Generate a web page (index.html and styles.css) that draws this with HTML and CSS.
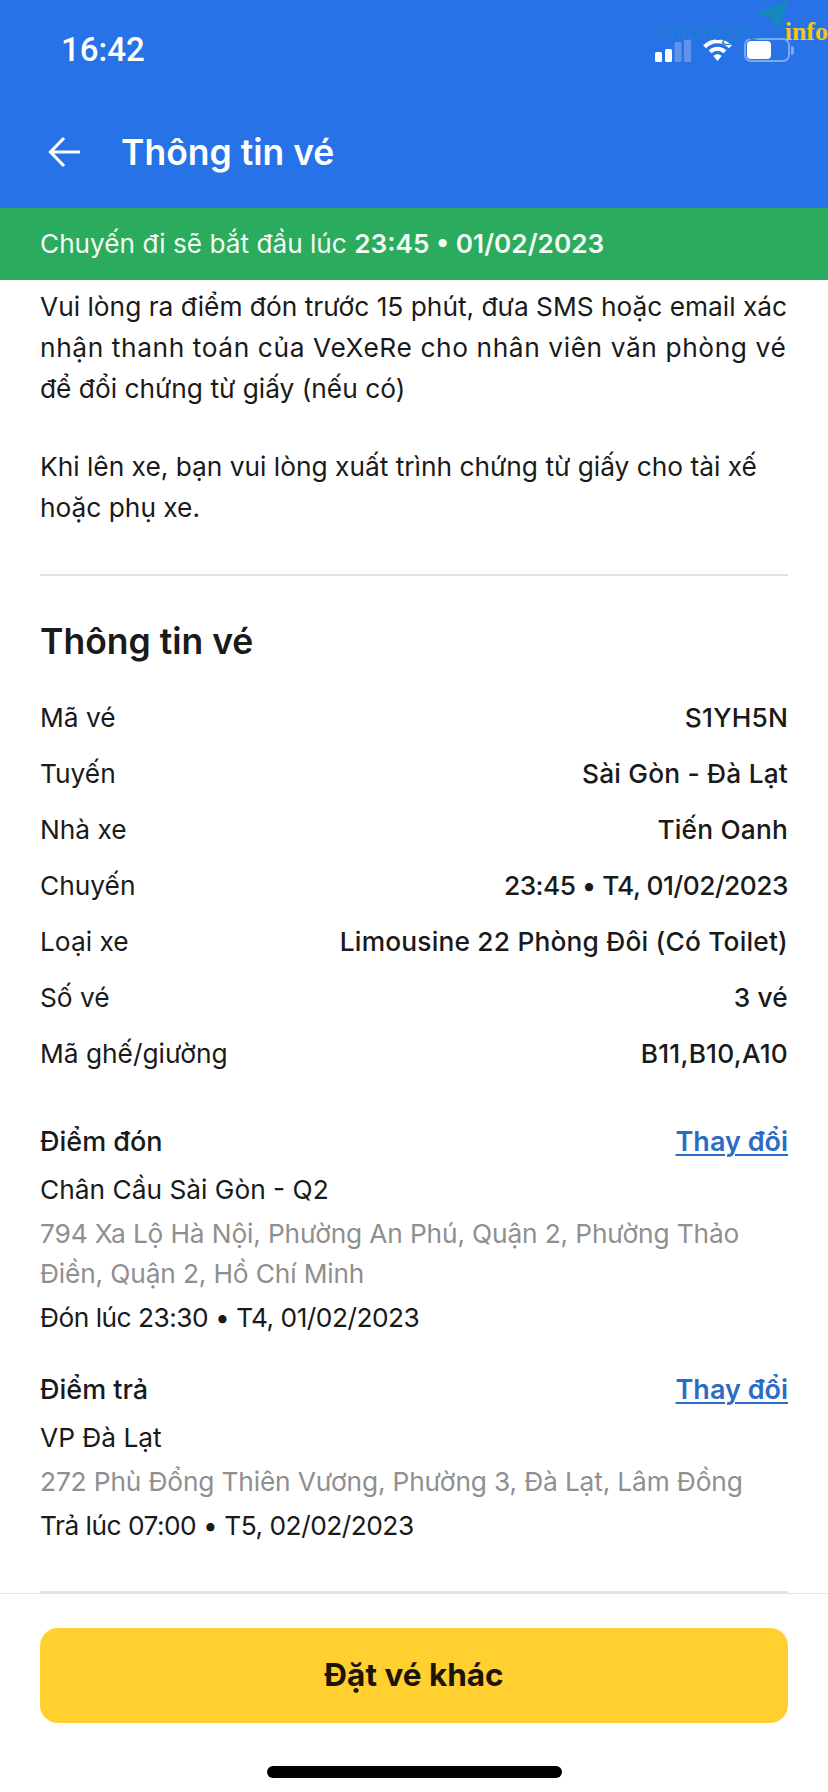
FILE: index.html
```html
<!DOCTYPE html>
<html lang="en">

<head>
  <meta charset="UTF-8">
  <meta name="viewport" content="width=device-width, initial-scale=1.0">
  <title>Thông tin vé</title>
  <link rel="stylesheet" href="styles.css">
</head>

<body>
  <div class="phone">
    <header class="top">
      <div class="status">
        <span class="clock">16:42</span>
        <div class="status-icons">
          <svg width="36" height="23" viewBox="0 0 36 23">
            <rect x="0" y="13" width="7" height="10" rx="1.500" fill="#fff" />
            <rect x="10" y="10" width="7" height="13" rx="1.500" fill="#fff" />
            <rect x="19.500" y="3" width="7" height="20" rx="1.500" fill="#5f93ec" />
            <rect x="29" y="0" width="7" height="23" rx="1.500" fill="#5f93ec" />
          </svg>
          <svg width="31" height="24" viewBox="0 0 32 26">
            <path d="M2 9.500C10 1.500 22 1.500 30 9.500" fill="none" stroke="#fff" stroke-width="4.500" />
            <path d="M8 15C12.500 10.500 19.500 10.500 24 15" fill="none" stroke="#fff" stroke-width="4.500" />
            <path d="M11.500 19.500C14 17 18 17 20.500 19.500L16 25Z" fill="#fff" />
          </svg>
          <div class="battery"><span class="battery-level"></span></div>
          <span class="battery-tip"></span>
        </div>
      </div>
      <div class="appbar">
        <svg class="back" width="32" height="32" viewBox="0 0 32 32">
          <path d="M16 2L2.500 16L16 30M3 16H32" fill="none" stroke="#fff" stroke-width="3.200" />
        </svg>
        <h1>Thông tin vé</h1>
      </div>
    </header>

    <div class="notice">Chuyến đi sẽ bắt đầu lúc <b>23:45 • 01/02/2023</b></div>

    <main class="content">
      <p class="intro">Vui lòng ra điểm đón trước 15 phút, đưa SMS hoặc email xác<br>
        <span class="wide">nhận thanh toán của VeXeRe cho nhân viên văn phòng vé</span><br>
        để đổi chứng từ giấy (nếu có)</p>
      <p class="intro intro-2">Khi lên xe, bạn vui lòng xuất trình chứng từ giấy cho tài xế hoặc phụ xe.</p>

      <hr class="line">

      <h2>Thông tin vé</h2>
      <ul class="rows">
        <li><span>Mã vé</span><b>S1YH5N</b></li>
        <li><span>Tuyến</span><b>Sài Gòn - Đà Lạt</b></li>
        <li><span>Nhà xe</span><b>Tiến Oanh</b></li>
        <li><span>Chuyến</span><b class="tight">23:45 • T4, 01/02/2023</b></li>
        <li><span>Loại xe</span><b>Limousine 22 Phòng Đôi (Có Toilet)</b></li>
        <li><span>Số vé</span><b>3 vé</b></li>
        <li><span>Mã ghế/giường</span><b>B11,B10,A10</b></li>
      </ul>

      <section class="stop">
        <div class="stop-head"><b>Điểm đón</b><a href="#">Thay đổi</a></div>
        <div class="stop-name">Chân Cầu Sài Gòn - Q2</div>
        <div class="stop-addr">794 Xa Lộ Hà Nội, Phường An Phú, Quận 2, Phường Thảo Điền, Quận 2, Hồ Chí Minh</div>
        <div class="stop-time tight">Đón lúc 23:30 • T4, 01/02/2023</div>
      </section>

      <section class="stop stop-2">
        <div class="stop-head"><b>Điểm trả</b><a href="#">Thay đổi</a></div>
        <div class="stop-name">VP Đà Lạt</div>
        <div class="stop-addr">272 Phù Đổng Thiên Vương, Phường 3, Đà Lạt, Lâm Đồng</div>
        <div class="stop-time tight">Trả lúc 07:00 • T5, 02/02/2023</div>
      </section>

      <hr class="line line-end">
    </main>

    <footer class="bottom">
      <button class="book">Đặt vé khác</button>
      <div class="home-bar"></div>
    </footer>

    <div class="watermark">
      <svg class="wm-plane" width="33" height="30" viewBox="0 0 33 30">
        <path d="M33 0L0 14L14 17L24 30Z" fill="#1788bb" />
      </svg>
      <span class="wm-name">Nhuongve</span><span class="wm-info">info</span>
    </div>
  </div>
</body>

</html>
```

FILE: styles.css
```css
html,
body {
  margin: 0;
  padding: 0;
}

body {
  font-family: "Inter", "Roboto", sans-serif;
  color: #1a1a1a;
  background: #fff;
}

.phone {
  position: relative;
  width: 828px;
  height: 1792px;
  display: flex;
  flex-direction: column;
  overflow: hidden;
}

.top {
  height: 208px;
  background: #2672e6;
  color: #fff;
}

.status {
  height: 122px;
  padding: 30px 34px 0 61px;
  box-sizing: border-box;
  display: flex;
  justify-content: space-between;
  align-items: flex-start;
}

.clock {
  font-family: "Roboto", sans-serif;
  font-size: 33px;
  font-weight: 500;
  line-height: 40px;
}

.status-icons {
  display: flex;
  align-items: center;
  gap: 11px;
  margin-top: 8px;
}

.battery {
  width: 46px;
  height: 24px;
  padding: 1px;
  border: 2px solid #7fa9ef;
  border-radius: 7px;
  box-sizing: border-box;
  display: flex;
}

.battery-level {
  width: 24px;
  background: #fff;
  border-radius: 4px;
}

.battery-tip {
  width: 3px;
  height: 9px;
  margin-left: -10px;
  background: #7fa9ef;
  border-radius: 0 3px 3px 0;
}

.appbar {
  display: flex;
  align-items: center;
  padding: 0 0 0 48px;
  height: 60px;
}

.back {
  margin-right: 41px;
}

.appbar h1 {
  margin: 0;
  font-size: 35.500px;
  font-weight: 600;
}

.notice {
  height: 72px;
  background: #2bab5e;
  color: #f2fbf5;
  padding-left: 40px;
  font-size: 26.200px;
  line-height: 72px;
}

.notice b {
  font-weight: 600;
}

.content {
  flex: 1;
  padding: 6px 40px 0;
  display: flex;
  flex-direction: column;
}

.intro {
  margin: 0;
  font-size: 26.300px;
  line-height: 41px;
}

.intro-2 {
  margin-top: 37px;
}

.wide {
  letter-spacing: 0.600px;
}

.line {
  width: 100%;
  margin: 46px 0 0;
  border: 0;
  border-top: 2px solid #e2e2e2;
}

.line-end {
  margin-top: auto;
}

h2 {
  margin: 45px 0 0;
  font-size: 35.500px;
  line-height: 42px;
  font-weight: 600;
}

.rows {
  list-style: none;
  margin: 27px 0 0;
  padding: 0;
}

.rows li {
  display: flex;
  justify-content: space-between;
  height: 56px;
  font-size: 26.300px;
  line-height: 56px;
}

.rows b {
  font-weight: 500;
  letter-spacing: 0.200px;
}

.stop {
  margin-top: 40px;
  font-size: 26.300px;
  line-height: 40px;
}

.stop-2 {
  margin-top: 32px;
}

.stop-head {
  display: flex;
  justify-content: space-between;
  margin-bottom: 8px;
}

.stop-head b {
  font-size: 27px;
  font-weight: 500;
}

.stop-head a {
  color: #2b6cc4;
  font-size: 27px;
  font-weight: 600;
  text-decoration-thickness: 2px;
  text-underline-offset: 3px;
}

.stop-addr {
  color: #8f8f8f;
  margin-top: 4px;
  letter-spacing: -0.150px;
}

.stop-time {
  margin-top: 4px;
}

.rows b.tight,
.tight {
  letter-spacing: -0.500px;
}

.bottom {
  height: 199px;
  box-sizing: border-box;
  border-top: 1px solid #e4e4e4;
  padding: 34px 40px 0;
  display: flex;
  flex-direction: column;
  align-items: center;
}

.book {
  width: 100%;
  height: 95px;
  padding: 0 0 3px;
  border: 0;
  border-radius: 18px;
  background: #ffd030;
  color: #1c1505;
  font-family: inherit;
  font-size: 31.500px;
  font-weight: 700;
}

.home-bar {
  width: 295px;
  height: 12px;
  margin-top: 43px;
  background: #000;
  border-radius: 6px;
}

/* watermark stamped over the status bar */
.watermark {
  position: absolute;
  top: 18px;
  left: 650px;
  width: 178px;
  display: flex;
  justify-content: space-between;
  font-family: "Liberation Serif", serif;
  font-size: 26px;
  line-height: 28px;
  white-space: nowrap;
}

.wm-plane {
  position: absolute;
  top: -18px;
  left: 105px;
}

.wm-name {
  color: #1d7fd0;
}

.wm-info {
  color: #f5c518;
  font-weight: 700;
}
```
